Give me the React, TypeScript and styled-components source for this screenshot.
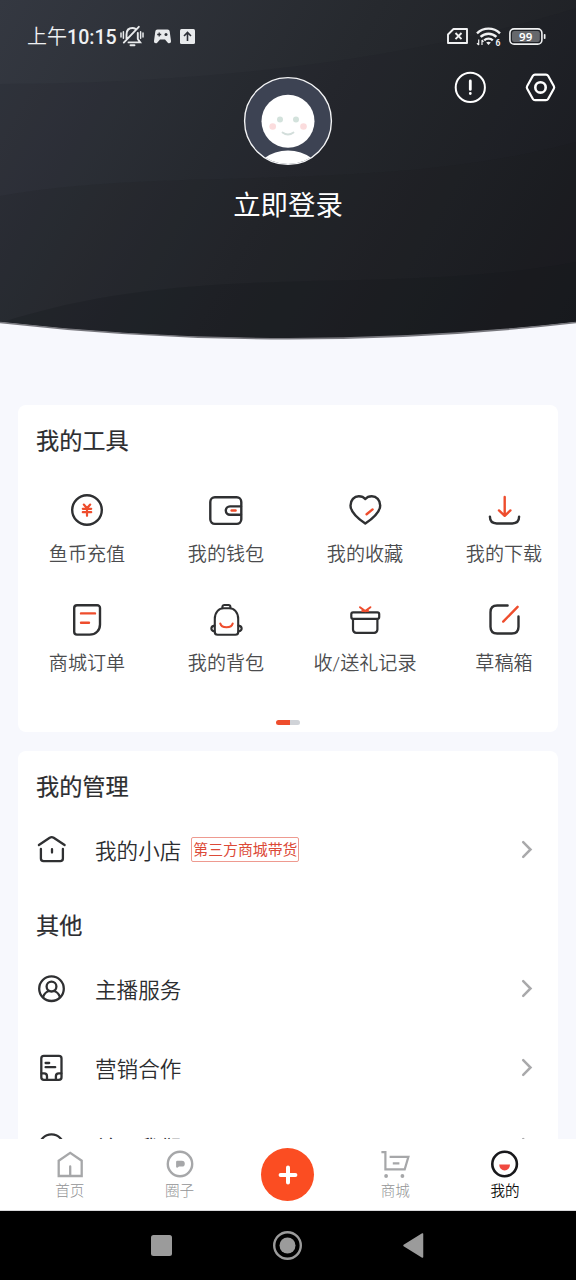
import React from "react";
import styled, { createGlobalStyle } from "styled-components";

const INK = "#2f3032";
const RED = "#ee4d2d";

const GlobalStyle = createGlobalStyle`
  *, *::before, *::after { box-sizing: border-box; }
  body {
    margin: 0;
    background: #f7f8fd;
    font-family: Roboto, "Noto Sans CJK SC", sans-serif;
  }
  svg { display: block; overflow: visible; flex: none; }
`;

const Screen = styled.div`
  width: 576px;
  height: 1280px;
  display: flex;
  flex-direction: column;
  overflow: hidden;
  background: #f7f8fd;
`;

const Scroller = styled.main`
  flex: 1;
  min-height: 0;
  overflow: hidden;
`;

const Header = styled.header`
  position: relative;
  height: 340px;
  display: flex;
  flex-direction: column;
  color: #fff;
`;

const HeaderArt = styled.svg`
  position: absolute;
  inset: 0;
`;

const StatusBar = styled.div`
  position: relative;
  height: 72px;
  padding: 0 30px 0 27px;
  display: flex;
  align-items: center;
  justify-content: space-between;
`;

const StatusGroup = styled.div<{ $gap: number }>`
  display: flex;
  align-items: center;
  gap: ${(p) => p.$gap}px;
`;

const Clock = styled.span`
  width: 93px;
  padding-top: 2px;
  font-size: 20px;
  line-height: 24px;
  font-weight: 350;
  color: #eef0f2;
  white-space: nowrap;
`;

const ClockDigits = styled.span`
  font-size: 19.6px;
  font-weight: 500;
`;

const Profile = styled.div`
  position: relative;
  display: grid;
  grid-template-columns: 1fr auto 1fr;
  padding: 5px 20px 0;
`;

const Identity = styled.div`
  grid-column: 2;
  display: flex;
  flex-direction: column;
  align-items: center;
  gap: 20px;
`;

const LoginLabel = styled.span`
  font-size: 27.4px;
  line-height: 42px;
`;

const Actions = styled.div`
  display: flex;
  justify-content: flex-end;
  align-items: center;
  height: 32px;
  margin-top: -6px;
  gap: 38px;
`;

const Card = styled.section<{ $top: number; $height: number }>`
  margin: ${(p) => p.$top}px 18px 0;
  height: ${(p) => p.$height}px;
  padding-top: 17px;
  background: #fff;
  border-radius: 8px;
  overflow: hidden;
`;

const CardTitle = styled.h2`
  margin: 0;
  padding-left: 18px;
  font-size: 23.2px;
  line-height: 38px;
  font-weight: 400;
  -webkit-text-stroke: 0.2px #2c2d30;
  color: #2c2d30;
`;

const ToolGrid = styled.div`
  display: grid;
  grid-template-columns: repeat(4, 139px);
  grid-auto-rows: 109px;
  margin-top: 32px;
  margin-left: -0.5px;
`;

const Tool = styled.div`
  display: flex;
  flex-direction: column;
  align-items: center;
  gap: 13px;
`;

const ToolLabel = styled.span`
  font-size: 19.1px;
  line-height: 28px;
  font-weight: 350;
  color: #4b4c4e;
  white-space: nowrap;
`;

const Pager = styled.div`
  width: 24px;
  height: 5px;
  margin: 10px auto 0;
  border-radius: 3px;
  background: linear-gradient(90deg, ${RED} 58%, #d0d3d8 58%);
`;

const SectionTitle = styled(CardTitle)`
  margin-top: 18px;
`;

const List = styled.div`
  display: flex;
  flex-direction: column;
  margin-top: 4px;
`;

const Row = styled.div`
  height: 79px;
  padding: 0 25px 0 17px;
  display: flex;
  align-items: center;
`;

const RowLabel = styled.span`
  margin-left: 28px;
  padding-top: 4px;
  font-size: 21.6px;
  line-height: 32px;
  font-weight: 350;
  color: #2c2d30;
`;

const Tag = styled.span`
  margin-left: 10px;
  width: 108px;
  height: 25px;
  display: flex;
  align-items: center;
  justify-content: center;
  border: 1px solid #ee9a90;
  border-radius: 2px;
  font-size: 14.9px;
  line-height: 22px;
  color: #dc4a38;
  white-space: nowrap;
`;

const Push = styled.div`
  margin-left: auto;
`;

const TabBar = styled.nav`
  height: 72px;
  padding: 0 16px 0 15px;
  display: grid;
  grid-template-columns: 1fr 1fr 106px 1fr 1fr;
  background: #fff;
  border-bottom: 1px solid #d9d9db;
`;

const Tab = styled.div<{ $active?: boolean }>`
  display: flex;
  flex-direction: column;
  align-items: center;
  padding-top: 10px;
  gap: 2px;
  font-size: 14.6px;
  line-height: 20px;
  font-weight: ${(p) => (p.$active ? 350 : 300)};
  color: ${(p) => (p.$active ? "#111" : "#929395")};
`;

const AddButton = styled.div`
  width: 53px;
  height: 53px;
  margin: 9px auto 0;
  border-radius: 50%;
  background: #fb4d22;
  display: flex;
  align-items: center;
  justify-content: center;
`;

const SystemNav = styled.div`
  height: 69px;
  padding-right: 2px;
  background: #000;
  display: flex;
  justify-content: center;
  align-items: center;
  gap: 97px;
`;

type IconProps = { size: number; children: React.ReactNode; color?: string; width?: number };

const Line = ({ size, children, color = INK, width = 2.4 }: IconProps) => (
  <svg
    width={size}
    height={size}
    viewBox={`0 0 ${size} ${size}`}
    fill="none"
    stroke={color}
    strokeWidth={width}
    strokeLinecap="round"
    strokeLinejoin="round"
  >
    {children}
  </svg>
);

const tools: { label: string; art: React.ReactNode }[] = [
  {
    label: "鱼币充值",
    art: (
      <>
        <circle cx="18" cy="18" r="14.8" />
        <path d="M14.8 12.6 18 16.2l3.2-3.6M13.8 16.8h8.4M13.8 20.2h8.4M18 16.6v7.2" stroke={RED} strokeWidth="2.2" />
      </>
    ),
  },
  {
    label: "我的钱包",
    art: (
      <>
        <rect x="2.3" y="5.3" width="31" height="26.6" rx="4.6" />
        <path d="M33 14.4H22a4.2 4.2 0 0 0 0 8.4h11" />
        <path d="M23.6 18.5h4" stroke={RED} />
      </>
    ),
  },
  {
    label: "我的收藏",
    art: (
      <>
        <path d="M18.3 31.6C13 28 3.5 20.7 3.5 13.4c0-5.2 3.6-9.2 8.3-9.2 2.8 0 5 1 6.5 2.9 1.5-1.9 3.7-2.9 6.5-2.9 4.7 0 8.4 4 8.4 9.2 0 7.3-9.6 14.6-14.9 18.2Z" />
        <path d="m19.6 22.2 6-4.8" stroke={RED} />
      </>
    ),
  },
  {
    label: "我的下载",
    art: (
      <>
        <path d="M3.9 24.6c0 4.6 2.4 6.9 6.8 6.9h15.6c4.4 0 6.8-2.3 6.8-6.9" />
        <path d="M18.7 5v18.6M13 18.4l5.7 5.4 5.7-5.4" stroke={RED} />
      </>
    ),
  },
  {
    label: "商城订单",
    art: (
      <>
        <path d="M8 4.2h20.2a2.8 2.8 0 0 1 2.8 2.8v16.4c0 6-4.2 10.2-10.4 10.2H8a2.8 2.8 0 0 1-2.8-2.8V7A2.8 2.8 0 0 1 8 4.2Z" />
        <path d="M12 12.4h14M12 21.7h8" stroke={RED} />
      </>
    ),
  },
  {
    label: "我的背包",
    art: (
      <g strokeWidth="2.1">
        <path d="M14.4 7V6a2 2 0 0 1 2-2h4a2 2 0 0 1 2 2v1" />
        <path d="M6.8 18C6.8 11.2 10.8 7.3 15.8 7.3h5.4c5 0 9 3.9 9 10.7v13a2.8 2.8 0 0 1-2.8 2.8H9.6A2.8 2.8 0 0 1 6.8 31Z" />
        <path d="M6.5 24.6c-4.2.8-4.2 5 0 5.8M30.5 24.6c4.2.8 4.2 5 0 5.8" />
        <path d="M12.3 22.5c1.2 5 11.2 5 12.4 0" stroke={RED} />
      </g>
    ),
  },
  {
    label: "收/送礼记录",
    art: (
      <>
        <rect x="4.3" y="11.3" width="27.9" height="6.5" rx="1.8" strokeWidth="2.2" />
        <path d="M6 18v10.6a3.2 3.2 0 0 0 3.2 3.2h18a3.2 3.2 0 0 0 3.2-3.2V18" strokeWidth="2.2" />
        <path d="m13 6.2 5.2 3.9 5.2-3.9M15.2 9.9h6" stroke={RED} strokeWidth="2" />
      </>
    ),
  },
  {
    label: "草稿箱",
    art: (
      <>
        <path d="M21.6 4.5H11.2c-4.3 0-6.7 2.4-6.7 6.7v14.6c0 4.3 2.4 6.7 6.7 6.7h14.6c4.3 0 6.7-2.4 6.7-6.7V15.4" />
        <path d="M17.2 20.6 31.6 5.8" stroke={RED} />
      </>
    ),
  },
];

const ShopIcon = () => (
  <Line size={32} width={2.3}>
    <path d="M3.9 11 14.7 3.7q2-1.2 4 0L29.6 11" />
    <path d="M5.9 15v9.6a2.6 2.6 0 0 0 2.6 2.6h16.8a2.6 2.6 0 0 0 2.6-2.6V15M17 15.2v3.3" />
  </Line>
);

const HostIcon = () => (
  <Line size={32} width={2.3}>
    <circle cx="16.5" cy="15.7" r="12.3" />
    <circle cx="16.5" cy="13.6" r="4.9" />
    <path d="M8 24c1.2-3.2 3.2-5.2 5.8-6M25 24c-1.2-3.2-3.2-5.2-5.8-6" />
  </Line>
);

const DocIcon = () => (
  <Line size={32} width={2.3}>
    <rect x="6.3" y="3.8" width="20.2" height="24" rx="2.6" />
    <path d="M10.6 11h3.6M10.6 15.2h9.6" />
    <path d="M6.6 21.4h2.6q2.8 0 2.8 2.8v3.4M26.3 21.4h-2.6q-2.8 0-2.8 2.8v3.4" />
  </Line>
);

const InfoIcon = () => (
  <Line size={32} width={2.3}>
    <circle cx="16.5" cy="15.7" r="12.3" />
    <path d="M16.5 14v7M16.5 10v.1" />
  </Line>
);

const Chevron = () => (
  <Push>
    <svg width="12" height="18" viewBox="0 0 12 18" fill="none" stroke="#a9a9ab" strokeWidth="2.5" strokeLinecap="round">
      <path d="m2.2 1.2 7.3 7.3-7.3 7.3" />
    </svg>
  </Push>
);

const HeaderBackground = () => (
  <HeaderArt width="576" height="340" viewBox="0 0 576 340">
    <defs>
      <linearGradient id="night" x1="0" y1="0" x2="576" y2="330" gradientUnits="userSpaceOnUse">
        <stop offset="0" stopColor="#343841" />
        <stop offset="0.5" stopColor="#26292e" />
        <stop offset="1" stopColor="#1b1c20" />
      </linearGradient>
      <clipPath id="bowl">
        <path d="M0 0H576V322Q288 355 0 322Z" />
      </clipPath>
    </defs>
    <g clipPath="url(#bowl)">
      <rect width="576" height="340" fill="url(#night)" />
      <path d="M0 84C150 84 380 70 576 8V340H0Z" fill="#15171a" fillOpacity="0.1" />
      <path d="M0 196C170 165 380 195 576 142V340H0Z" fill="#15171a" fillOpacity="0.12" />
      <path d="M0 323C200 258 380 298 576 262V340H0Z" fill="#15161a" fillOpacity="0.26" />
    </g>
    <path d="M0 322.5Q288 355 576 322.5" fill="none" stroke="#77777d" strokeWidth="1.6" />
  </HeaderArt>
);

const Avatar = () => (
  <svg width="88" height="88" viewBox="0 0 88 88">
    <defs>
      <clipPath id="face">
        <circle cx="44" cy="44" r="43" />
      </clipPath>
    </defs>
    <circle cx="44" cy="44" r="43" fill="#3d4353" />
    <g clipPath="url(#face)">
      <circle cx="44" cy="44.2" r="26.5" fill="#fff" />
      <ellipse cx="44" cy="99" rx="33" ry="25.5" fill="#fff" />
    </g>
    <circle cx="36" cy="42.5" r="3" fill="#d3e2dc" />
    <circle cx="52" cy="42.5" r="3" fill="#d3e2dc" />
    <circle cx="28.7" cy="49.5" r="3.3" fill="#fbdcdd" />
    <circle cx="59.5" cy="49.5" r="3.3" fill="#fbdcdd" />
    <path d="M38.5 55.5q5.5 4 11 0" fill="none" stroke="#d3dedb" strokeWidth="1.8" strokeLinecap="round" />
    <circle cx="44" cy="44" r="43.4" fill="none" stroke="#f3f4f6" strokeWidth="1.4" />
  </svg>
);

const MutedBell = () => (
  <svg width="24" height="22" viewBox="0 0 24 22" fill="none" stroke="#e8eaec" strokeWidth="1.9" strokeLinecap="round">
    <path d="M6.5 14V9.5c0-4 2.3-6.5 6-6.5 1.2 0 2.2.3 3.1.8M17.8 8v6l2.4 3.4H8.5M10.5 20.3h4M18.8 1.8 3.8 17.6" />
    <path d="M1 8v4M3.4 6.8v6.4M23 8v4M20.6 6.8v6.4" strokeWidth="1.5" />
  </svg>
);

const Gamepad = () => (
  <svg width="17" height="15" viewBox="0 0 17 15">
    <path
      d="M3.5.5h10c1.3 0 2 .8 2.2 2L17 12c.2 2-1.8 3-3.2 1.7L11 10.500H6l-2.800 3.200C1.800 15-.2 14 0 12L1.300 2.500C1.500 1.300 2.200.5 3.500.5Z"
      fill="#e8eaec"
    />
    <path d="M5.2 3.5v4M3.2 5.5h4" stroke="#2d3037" strokeWidth="1.3" />
    <circle cx="12" cy="5.5" r="1.5" fill="#2d3037" />
  </svg>
);

const UploadBox = () => (
  <svg width="15" height="15" viewBox="0 0 15 15">
    <rect width="15" height="15" rx="1.5" fill="#e8eaec" />
    <path d="M7.5 12V3.5M4 7l3.5-3.5L11 7" fill="none" stroke="#2d3037" strokeWidth="1.6" />
  </svg>
);

const SimOff = () => (
  <svg width="21" height="16" viewBox="0 0 21 16" fill="none" stroke="#f0f1f2" strokeWidth="1.9" strokeLinejoin="round">
    <path d="M6.5 1H20v14H1V6.5Z" />
    <path d="m8.5 5 6 6.2M14.5 5l-6 6.2" />
  </svg>
);

const Wifi = () => (
  <svg width="25" height="19" viewBox="0 0 25 19" fill="none" stroke="#f0f1f2" strokeWidth="2.4">
    <path d="M1 6.3c6.4-6.2 16.6-6.2 23 0M4.6 9.9c4.4-4.3 11.4-4.3 15.8 0M8.2 13.3c2.4-2.3 6.2-2.3 8.6 0" />
    <path d="m12.5 18-2.3-2.4q2.3-1.8 4.6 0Z" fill="#f0f1f2" stroke="none" />
    <path d="M2.7 12.5v5.5M1 16.2l1.7 1.8M6 18v-5M6 13l1.5 1.8" strokeWidth="1.2" />
    <text x="19.5" y="18.8" fontSize="8.5" fontWeight="700" fill="#f0f1f2" stroke="none">6</text>
  </svg>
);

const Battery = () => (
  <svg width="37" height="17" viewBox="0 0 37 17">
    <rect x="0.9" y="0.9" width="32" height="15.2" rx="4.2" fill="none" stroke="#f0f1f2" strokeWidth="1.6" />
    <rect x="3" y="3" width="27.8" height="11" rx="2.2" fill="#66686c" />
    <rect x="34.8" y="6" width="1.7" height="5" rx="0.8" fill="#f0f1f2" />
    <text x="16.7" y="12.6" textAnchor="middle" fontSize="11.5" fontWeight="600" fill="#fff" fontFamily="'Noto Sans', sans-serif">
      99
    </text>
  </svg>
);

const menu = [
  { label: "主播服务", icon: <HostIcon /> },
  { label: "营销合作", icon: <DocIcon /> },
  { label: "关于我们", icon: <InfoIcon /> },
];

export default function App() {
  return (
    <Screen>
      <GlobalStyle />
      <Scroller>
        <Header>
          <HeaderBackground />
          <StatusBar>
            <StatusGroup $gap={0}>
              <Clock>
                上午<ClockDigits>10:15</ClockDigits>
              </Clock>
              <StatusGroup $gap={9.5}>
                <MutedBell />
                <Gamepad />
                <UploadBox />
              </StatusGroup>
            </StatusGroup>
            <StatusGroup $gap={8}>
              <SimOff />
              <Wifi />
              <Battery />
            </StatusGroup>
          </StatusBar>
          <Profile>
            <Identity>
              <Avatar />
              <LoginLabel>立即登录</LoginLabel>
            </Identity>
            <Actions>
              <Line size={32} color="#fff" width={2}>
                <circle cx="16.3" cy="16.4" r="14.6" />
                <path d="M16.3 10v8.4M16.3 22.4v.2" strokeWidth="2.8" />
              </Line>
              <Line size={32} color="#fff" width={2.2}>
                <g transform="translate(0.5 0.4)">
                  <path d="M10.5 3.2h11q1.4 0 2.1 1.2l5.7 10.2q.8 1.4 0 2.8l-5.7 10.2q-.7 1.2-2.1 1.2h-11q-1.4 0-2.1-1.2L2.7 17.4q-.8-1.4 0-2.8L8.4 4.4q.7-1.2 2.1-1.2Z" />
                  <circle cx="16" cy="16" r="5.2" strokeWidth="2.6" />
                </g>
              </Line>
            </Actions>
          </Profile>
        </Header>

        <Card $top={65} $height={327}>
          <CardTitle>我的工具</CardTitle>
          <ToolGrid>
            {tools.map((t) => (
              <Tool key={t.label}>
                <Line size={36}>{t.art}</Line>
                <ToolLabel>{t.label}</ToolLabel>
              </Tool>
            ))}
          </ToolGrid>
          <Pager />
        </Card>

        <Card $top={19} $height={460}>
          <CardTitle>我的管理</CardTitle>
          <List>
            <Row>
              <ShopIcon />
              <RowLabel>我的小店</RowLabel>
              <Tag>第三方商城带货</Tag>
              <Chevron />
            </Row>
          </List>
          <SectionTitle>其他</SectionTitle>
          <List>
            {menu.map((m) => (
              <Row key={m.label}>
                {m.icon}
                <RowLabel>{m.label}</RowLabel>
                <Chevron />
              </Row>
            ))}
          </List>
        </Card>
      </Scroller>

      <TabBar>
        <Tab>
          <Line size={30} color="#a6a7a9" width={2.3}>
            <path d="M3.7 11.7 15.2 3.8l11.5 7.9V27h-23ZM15.2 17.5V27" strokeLinejoin="miter" />
          </Line>
          首页
        </Tab>
        <Tab>
          <Line size={30} color="#a6a7a9" width={2.4}>
            <circle cx="15" cy="15" r="12.2" />
            <path d="M12.3 17.4v-4.4h4.6a1.7 1.7 0 0 1 0 3.4h-3.4l-1.200 1Z" fill="#a6a7a9" />
          </Line>
          圈子
        </Tab>
        <AddButton>
          <Line size={22} color="#fff" width={4}>
            <path d="M11 3.600v14.800M3.600 11h14.800" />
          </Line>
        </AddButton>
        <Tab>
          <Line size={30} color="#a6a7a9" width={2.2}>
            <path d="M1.4 3.2h4v17.2h19.3L28.4 7.8H9.6M12.8 14.3h6.6" strokeLinejoin="miter" strokeLinecap="butt" />
            <circle cx="6.1" cy="27" r="1.9" fill="#a6a7a9" stroke="none" />
            <circle cx="22.4" cy="27" r="1.9" fill="#a6a7a9" stroke="none" />
          </Line>
          商城
        </Tab>
        <Tab $active>
          <Line size={30} color="#18181b" width={2.6}>
            <circle cx="14.6" cy="15" r="12.3" />
            <path d="M9.2 15.6h10.8a5.4 6 0 0 1-10.8 0Z" fill="#f04a41" stroke="none" />
          </Line>
          我的
        </Tab>
      </TabBar>

      <SystemNav>
        <svg width="29" height="29" viewBox="0 0 29 29">
          <rect x="4" y="4" width="21" height="21" rx="2.5" fill="#9b9b9b" />
        </svg>
        <svg width="29" height="29" viewBox="0 0 29 29">
          <circle cx="14.5" cy="14.5" r="13.3" fill="none" stroke="#9b9b9b" strokeWidth="2.4" />
          <circle cx="14.5" cy="14.5" r="8" fill="#9b9b9b" />
        </svg>
        <svg width="29" height="29" viewBox="0 0 29 29">
          <path d="M5 14.5 23.500 3v23Z" fill="#9b9b9b" stroke="#9b9b9b" strokeWidth="1.5" strokeLinejoin="round" />
        </svg>
      </SystemNav>
    </Screen>
  );
}
